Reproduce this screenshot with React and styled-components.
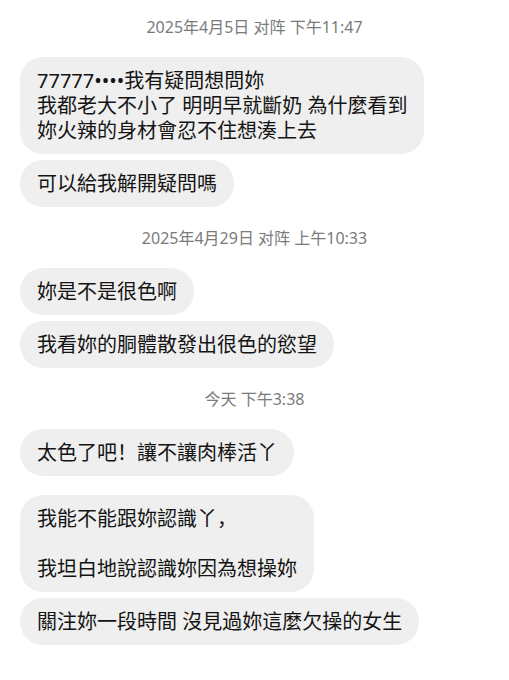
import styled, { createGlobalStyle } from 'styled-components';

const GlobalStyle = createGlobalStyle`
  html, body {
    margin: 0;
    padding: 0;
    background: #ffffff;
  }
  body {
    font-family: 'Noto Sans', 'Noto Sans CJK SC', sans-serif;
    -webkit-font-smoothing: antialiased;
  }
`;

const Thread = styled.main`
  display: flex;
  flex-direction: column;
  width: 509px;
  min-height: 680px;
  padding: 0 20px;
  box-sizing: border-box;
  background: #fff;
`;

const Timestamp = styled.div`
  align-self: center;
  padding: 21px 0 20px;
  font-size: 16px;
  line-height: 20px;
  color: #7a7a7a;
  white-space: nowrap;

  &:first-child {
    padding-top: 17px;
  }
`;

const Group = styled.div`
  display: flex;
  flex-direction: column;
  align-items: flex-start;
  gap: 6px;

  & + & {
    margin-top: 19px;
  }
`;

const Bubble = styled.div`
  padding: 11px 17px;
  background: #efefef;
  border-radius: 23px;
  font-size: 20px;
  line-height: 25px;
  color: #141414;
  white-space: pre;
`;

const conversation = [
  {
    time: '2025年4月5日 对阵 下午11:47',
    groups: [
      [
        '77777••••我有疑問想問妳\n我都老大不小了 明明早就斷奶 為什麼看到\n妳火辣的身材會忍不住想湊上去',
        '可以給我解開疑問嗎',
      ],
    ],
  },
  {
    time: '2025年4月29日 对阵 上午10:33',
    groups: [['妳是不是很色啊', '我看妳的胴體散發出很色的慾望']],
  },
  {
    time: '今天 下午3:38',
    groups: [
      ['太色了吧！讓不讓肉棒活丫'],
      ['我能不能跟妳認識丫，\n\n我坦白地說認識妳因為想操妳', '關注妳一段時間 沒見過妳這麼欠操的女生'],
    ],
  },
];

const App = () => (
  <>
    <GlobalStyle />
    <Thread>
      {conversation.map((block) => [
        <Timestamp key={block.time}>{block.time}</Timestamp>,
        ...block.groups.map((group, i) => (
          <Group key={block.time + i}>
            {group.map((text) => (
              <Bubble key={text}>{text}</Bubble>
            ))}
          </Group>
        )),
      ])}
    </Thread>
  </>
);

export default App;
